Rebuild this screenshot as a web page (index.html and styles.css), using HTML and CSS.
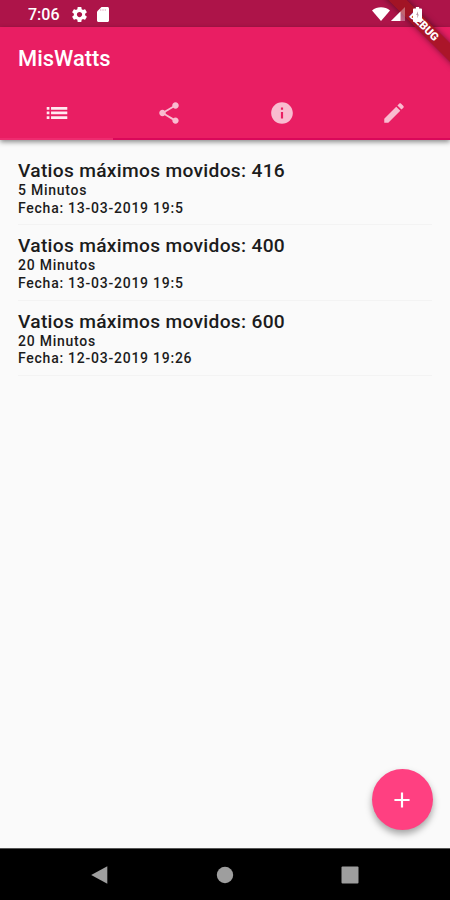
FILE: index.html
```html
<!DOCTYPE html>
<html lang="es">
<head>
    <meta charset="UTF-8">
    <meta name="viewport" content="width=device-width, initial-scale=1.0">
    <title>MisWatts</title>
    <link rel="stylesheet" href="styles.css">
</head>
<body>
    <div class="phone">
        <div class="debug"><span>DEBUG</span></div>
        <div class="status">
            <span class="time">7:06</span>
            <svg class="gear" width="15" height="15" viewBox="2 2 20 20"><path d="M19.43 12.98c.04-.32.07-.64.07-.98s-.03-.66-.07-.98l2.11-1.65c.19-.15.24-.42.12-.64l-2-3.46c-.12-.22-.39-.3-.61-.22l-2.49 1c-.52-.4-1.08-.73-1.69-.98l-.38-2.65C14.46 2.18 14.25 2 14 2h-4c-.25 0-.46.18-.49.42l-.38 2.65c-.61.25-1.17.59-1.69.98l-2.49-1c-.23-.09-.49 0-.61.22l-2 3.46c-.13.22-.07.49.12.64l2.11 1.65c-.04.32-.07.65-.07.98s.03.66.07.98l-2.11 1.65c-.19.15-.24.42-.12.64l2 3.46c.12.22.39.3.61.22l2.49-1c.52.4 1.08.73 1.69.98l.38 2.65c.03.24.24.42.49.42h4c.25 0 .46-.18.49-.42l.38-2.65c.61-.25 1.17-.59 1.69-.98l2.49 1c.23.09.49 0 .61-.22l2-3.46c.12-.22.07-.49-.12-.64l-2.11-1.65zM12 15.5c-1.93 0-3.5-1.57-3.5-3.5s1.57-3.5 3.5-3.5 3.5 1.57 3.5 3.5-1.57 3.5-3.5 3.5z"/></svg>
            <svg class="sd" width="12" height="15" viewBox="4 2 16 20" preserveAspectRatio="none"><path d="M18 2h-8L4 8v12c0 1.1.9 2 2 2h12c1.1 0 2-.9 2-2V4c0-1.1-.9-2-2-2z"/><path d="M9 5v2M12 5v2M15 5v2" stroke="#ad1457" stroke-opacity=".4" stroke-width="1.3"/></svg>
            <svg class="wifi" width="18" height="14" viewBox="0 0 18 14"><path d="M9 14 0 3.5C5-.8 13-.8 18 3.5z"/></svg>
            <svg class="signal" width="14" height="14" viewBox="0 0 14 14"><path d="M14 0v14H0z" opacity=".35"/><path d="M9.5 4.5V14H0z"/></svg>
            <svg class="battery" width="9" height="15" viewBox="0 0 10 16" preserveAspectRatio="none"><path d="M3.2 0h3.6v1.7H9q1 0 1 1V15q0 1-1 1H1q-1 0-1-1V2.7q0-1 1-1h2.2z"/><path d="M5.500 4.500 3.500 8.500h1.300v3.500L6.500 8H5.500z" fill="#b8909f"/></svg>
        </div>
        <header>
            <h1>MisWatts</h1>
            <nav>
                <a class="tab active"><svg width="26" height="26" viewBox="0 0 24 24"><path d="M2.5 6.500h2.500v2.500H2.500zM2.500 10.700h2.500v2.500H2.500zM2.500 15h2.500v2.500H2.500zM6.500 6.500h15v2.500h-15zM6.500 10.700h15v2.500h-15zM6.500 15h15v2.500h-15z"/></svg></a>
                <a class="tab"><svg width="26" height="26" viewBox="0 0 24 24"><path d="M18 16.080c-.76 0-1.440.3-1.960.77L8.910 12.700c.05-.23.09-.46.09-.7s-.04-.47-.09-.7l7.050-4.110c.54.5 1.250.81 2.040.81 1.660 0 3-1.340 3-3s-1.340-3-3-3-3 1.340-3 3c0 .24.04.47.09.7L8.040 9.810C7.500 9.310 6.790 9 6 9c-1.660 0-3 1.340-3 3s1.340 3 3 3c.79 0 1.500-.31 2.040-.81l7.120 4.160c-.05.21-.08.43-.08.65 0 1.610 1.310 2.920 2.920 2.920s2.920-1.310 2.920-2.920-1.310-2.920-2.920-2.920z"/></svg></a>
                <a class="tab"><svg width="26" height="26" viewBox="0 0 24 24"><path d="M12 2C6.480 2 2 6.480 2 12s4.480 10 10 10 10-4.480 10-10S17.520 2 12 2zm1 15h-2v-6h2v6zm0-8h-2V7h2v2z"/></svg></a>
                <a class="tab"><svg width="26" height="26" viewBox="0 0 24 24"><path d="M3 17.250V21h3.750L17.810 9.940l-3.750-3.750L3 17.250zM20.710 7.040c.39-.39.39-1.020 0-1.410l-2.340-2.340c-.39-.39-1.020-.39-1.410 0l-1.830 1.830 3.750 3.750 1.830-1.830z"/></svg></a>
            </nav>
        </header>
        <main>
            <div class="item">
                <h2>Vatios máximos movidos: 416</h2>
                <p>5 Minutos</p>
                <p>Fecha: 13-03-2019 19:5</p>
            </div>
            <div class="item">
                <h2>Vatios máximos movidos: 400</h2>
                <p>20 Minutos</p>
                <p>Fecha: 13-03-2019 19:5</p>
            </div>
            <div class="item">
                <h2>Vatios máximos movidos: 600</h2>
                <p>20 Minutos</p>
                <p>Fecha: 12-03-2019 19:26</p>
            </div>
        </main>
        <button class="fab"><svg width="26" height="26" viewBox="0 0 24 24"><path d="M19 13h-6v6h-2v-6H5v-2h6V5h2v6h6v2z"/></svg></button>
        <footer>
            <svg width="18" height="18" viewBox="0 0 18 18"><path d="M16.300.3v17.400L.2 9z"/></svg>
            <svg width="18" height="18" viewBox="0 0 18 18"><circle cx="9" cy="9" r="8.200"/></svg>
            <svg width="18" height="18" viewBox="0 0 18 18"><rect x=".5" y=".5" width="17" height="17" rx="1"/></svg>
        </footer>
    </div>
</body>
</html>
```
FILE: styles.css
```css
*{
    box-sizing: border-box;
}
body{
    margin: 0;
    font-family: Roboto, sans-serif;
    background: #fafafa;
}
h1,
h2,
p{
    margin: 0;
    font-weight: 500;
}
svg{
    display: block;
    flex: none;
    fill: currentColor;
}
.phone{
    position: relative;
    display: flex;
    flex-direction: column;
    height: 900px;
    overflow: hidden;
}

/* status bar */
.status{
    display: flex;
    align-items: center;
    height: 27px;
    padding: 1px 28px 0 28px;
    color: #fff;
    background: #ad1449;
}
.status svg{
    position: relative;
    z-index: 3;
}
.time{
    width: 43px;
    font-size: 16px;
    font-weight: 500;
}
.gear{
    margin-left: 1px;
}
.sd{
    margin-left: 10px;
}
.wifi{
    margin-left: auto;
}
.signal{
    margin-left: 1px;
}
.battery{
    margin-left: 8px;
}

/* app bar and tabs */
header{
    height: 113px;
    color: #fff;
    background: #e91e63;
    box-shadow: 0 2px 5px rgba(0,0,0,0.45);
}
h1{
    height: 60px;
    padding-left: 18px;
    font-size: 21.9px;
    line-height: 63px;
}
nav{
    display: flex;
    height: 53px;
}
.tab{
    flex: 1;
    display: flex;
    justify-content: center;
    align-items: center;
    padding-left: 1px;
    color: #f9bcd0;
    border-bottom: 2px solid #d9085a;
}
.tab.active{
    color: #ffeaf1;
    border-color: #ee2c70;
}

/* ribbon */
.debug{
    position: absolute;
    z-index: 2;
    top: 20px;
    right: -24px;
    width: 100px;
    height: 13px;
    transform: rotate(45deg);
    background: rgba(160,20,30,0.85);
    box-shadow: 0 0 6px rgba(0,0,0,0.5);
    color: #fff;
    font-size: 11.2px;
    font-weight: 900;
    line-height: 13px;
    text-align: center;
}

/* list */
main{
    flex: 1;
    padding: 10px 18px 0;
}
.item{
    height: 75.4px;
    padding-top: 9px;
    color: #1c1c1c;
    border-bottom: 1px solid #f3f3f3;
}
h2{
    font-size: 19.2px;
    line-height: 23px;
    letter-spacing: 0.3px;
}
p{
    font-size: 14px;
    line-height: 17.5px;
    letter-spacing: 0.75px;
}

.fab{
    position: absolute;
    right: 17px;
    bottom: 70px;
    display: flex;
    justify-content: center;
    align-items: center;
    width: 61px;
    height: 61px;
    padding: 0 1px 0 0;
    border: none;
    border-radius: 50%;
    color: #fff;
    background: #ff4081;
    box-shadow: 0 4px 7px rgba(0,0,0,0.35);
}

/* navigation buttons */
footer{
    display: flex;
    justify-content: center;
    align-items: center;
    gap: 107px;
    height: 52px;
    color: #9e9e9e;
    background: #000;
    border-top: 1px solid #555;
}
```
